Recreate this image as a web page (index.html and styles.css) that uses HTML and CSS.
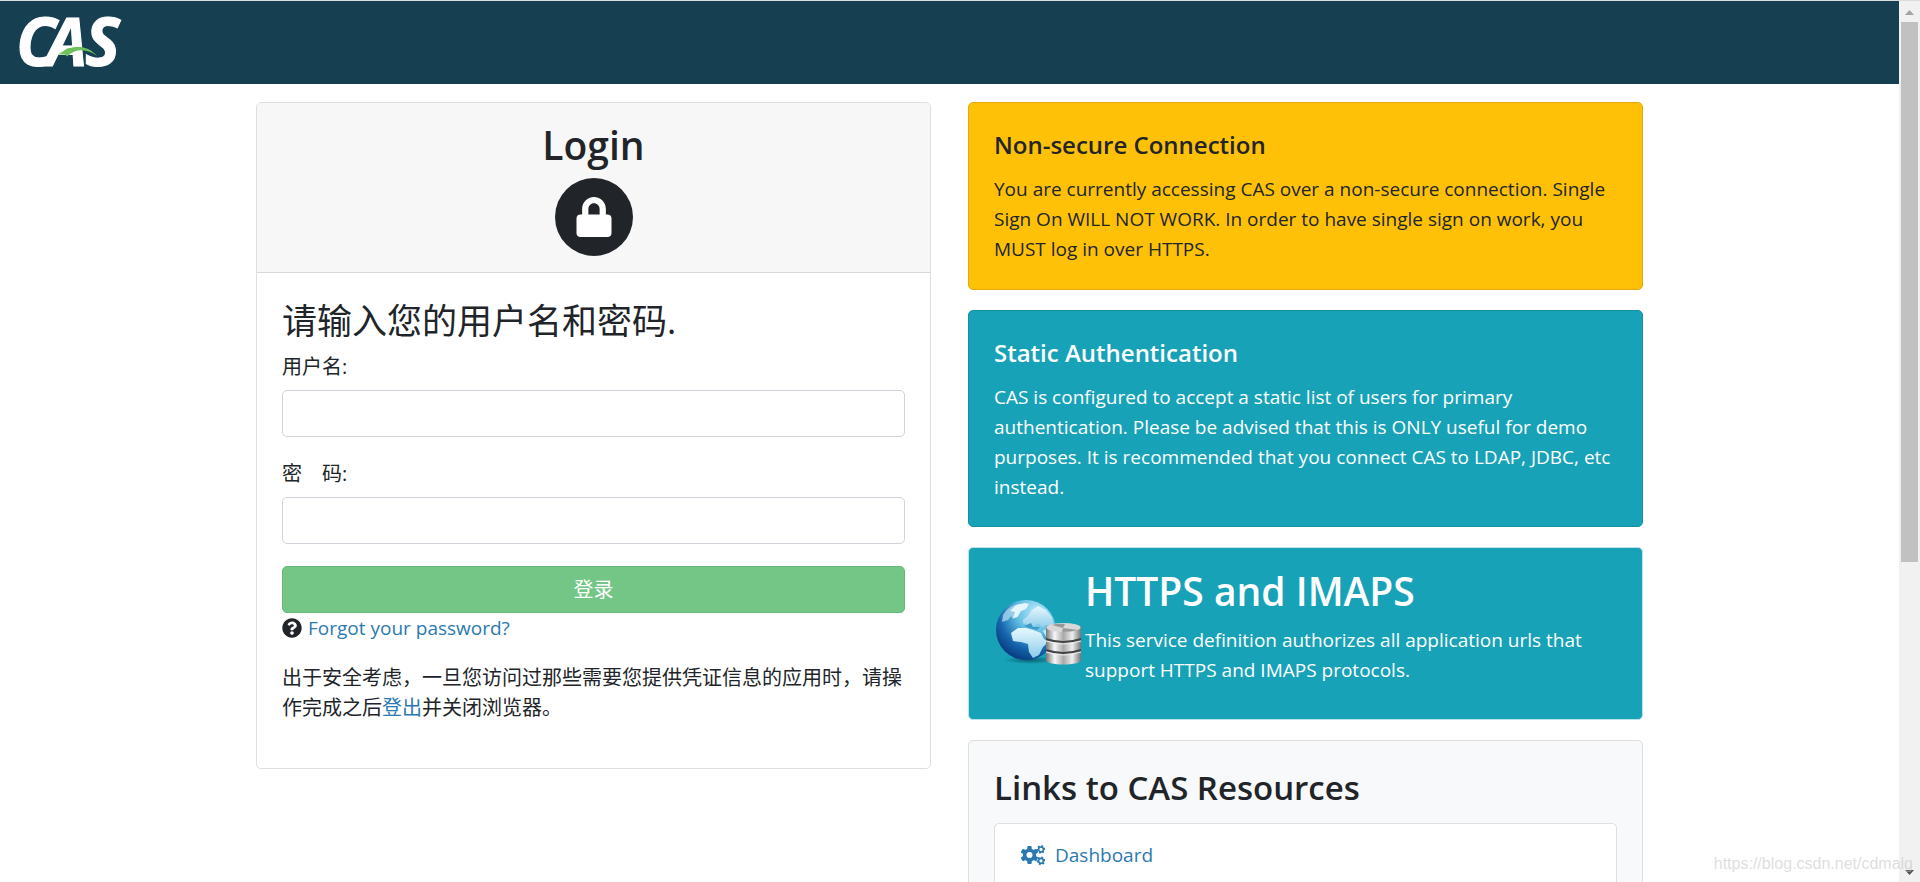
FILE: index.html
```html
<!DOCTYPE html>
<html lang="zh-CN">
<head>
<meta charset="utf-8">
<title>Login - CAS</title>
<link rel="stylesheet" href="styles.css">
</head>
<body>
<div class="page">
  <header class="topbar">
    <svg class="logo" width="124" height="83" viewBox="-8 0 124 83" role="img" aria-label="CAS">
      <text class="logo-text" x="-2 28 67" y="65">CAS</text>
      <path d="M40 53.500C44 51 47 49 49 47.500C60 44.500 71 45 79 55C70 48 58 46.500 49 55.500L47 53.500Z" fill="#6fc15f"/>
    </svg>
  </header>
  <main class="container">
    <section class="card login">
      <div class="card-head">
        <h1 class="title-lg">Login</h1>
        <svg class="lock" viewBox="0 0 78 78" aria-hidden="true">
          <circle cx="39" cy="39" r="39" fill="#212529"/>
          <svg x="21" y="19" width="36" height="40" viewBox="0 0 448 512"><path fill="#fff" d="M400 224h-24v-72C376 68.2 307.8 0 224 0S72 68.2 72 152v72H48c-26.5 0-48 21.5-48 48v192c0 26.5 21.5 48 48 48h352c26.5 0 48-21.5 48-48V272c0-26.5-21.5-48-48-48zm-104 0H152v-72c0-39.7 32.3-72 72-72s72 32.3 72 72v72z"/></svg>
        </svg>
      </div>
      <form class="card-body">
        <h2 class="prompt">请输入您的用户名和密码.</h2>
        <div class="field">
          <label for="username">用户名:</label>
          <input id="username" type="text">
        </div>
        <div class="field">
          <label for="password">密　码:</label>
          <input id="password" type="password">
        </div>
        <button class="submit" type="button">登录</button>
        <div class="forgot">
          <svg width="20" height="20" viewBox="0 0 512 512" aria-hidden="true"><path fill="#212529" d="M504 256c0 136.997-111.043 248-248 248S8 392.997 8 256C8 119.083 119.043 8 256 8s248 111.083 248 248zM262.655 90c-54.497 0-89.255 22.957-116.549 63.758-3.536 5.286-2.353 12.415 2.715 16.258l34.699 26.31c5.205 3.947 12.621 3.008 16.665-2.122 17.864-22.658 30.113-35.797 57.303-35.797 20.429 0 45.698 13.148 45.698 32.958 0 14.976-12.363 22.667-32.534 33.976C247.128 238.528 216 254.941 216 296v4c0 6.627 5.373 12 12 12h56c6.627 0 12-5.373 12-12v-1.333c0-28.462 83.186-29.647 83.186-106.667 0-58.002-60.165-102-116.531-102zM256 338c-25.365 0-46 20.635-46 46 0 25.364 20.635 46 46 46s46-20.636 46-46c0-25.365-20.635-46-46-46z"/></svg>
          <a href="#">Forgot your password?</a>
        </div>
        <p class="notice">出于安全考虑，一旦您访问过那些需要您提供凭证信息的应用时，请操作完成之后<a href="#">登出</a>并关闭浏览器。</p>
      </form>
    </section>
    <div class="side">
      <section class="card pad warning">
        <h4 class="title-sm">Non-secure Connection</h4>
        <p>You are currently accessing CAS over a non-secure connection. Single Sign On WILL NOT WORK. In order to have single sign on work, you MUST log in over HTTPS.</p>
      </section>
      <section class="card pad info">
        <h4 class="title-sm">Static Authentication</h4>
        <p>CAS is configured to accept a static list of users for primary authentication. Please be advised that this is ONLY useful for demo purposes. It is recommended that you connect CAS to LDAP, JDBC, etc instead.</p>
      </section>
      <section class="card service">
        <svg class="service-icon" width="91" height="90" viewBox="0 0 91 90" aria-hidden="true">
          <defs>
            <radialGradient id="sea" cx=".68" cy=".2" r=".85"><stop offset="0" stop-color="#b9e9fa"/><stop offset=".4" stop-color="#62bde2"/><stop offset=".75" stop-color="#1565ac"/><stop offset="1" stop-color="#073b80"/></radialGradient>
            <linearGradient id="land" x1="0" y1="0" x2="0" y2="1"><stop offset="0" stop-color="#e6f8fd"/><stop offset="1" stop-color="#8ccbeb"/></linearGradient>
            <linearGradient id="metal"><stop offset="0" stop-color="#777"/><stop offset=".25" stop-color="#f7f7f7"/><stop offset=".5" stop-color="#a9a9a9"/><stop offset=".75" stop-color="#eee"/><stop offset="1" stop-color="#777"/></linearGradient>
            <radialGradient id="shade"><stop offset="0" stop-color="#003040" stop-opacity=".6"/><stop offset="1" stop-color="#003040" stop-opacity="0"/></radialGradient>
          </defs>
          <ellipse cx="36" cy="74" rx="27" ry="4" fill="url(#shade)"/>
          <circle cx="32" cy="44" r="30" fill="url(#sea)"/>
          <path d="M9 29C14 21 20 18 27 18L33 20L31 24L27 25L24 31L19 33L17 30L14 34L8 36Z" fill="#a5d4ee" opacity=".8"/>
          <path d="M22 19L31 17L35 18L32 23L27 25L23 31L19 32L21 26L16 25Z" fill="#e4f6fc"/>
          <path d="M34 30L38 24L44 20L52 24L58 31L61 42L57 43L53 39L48 41L44 37L40 40L34 40L29 37L29 34Z" fill="url(#land)"/>
          <path d="M17 47L24 42L32 42L39 44L47 47L50 53L55 55L49 61L45 69L39 72L35 66L34 58L27 56L19 55Z" fill="url(#land)"/>
          <path d="M30 40L37 37L39 41L46 41L43 44L35 42Z" fill="#3f9bc5"/>
          <path d="M50 44L56 55L60 49" fill="none" stroke="#b9e5f5" stroke-width="3"/>
          <path d="M52 41C52 37 87 37 87 41V74C87 80 52 80 52 74Z" fill="url(#metal)"/>
          <ellipse cx="69.500" cy="41.500" rx="17" ry="4.500" fill="#d8d8d8"/>
          <path d="M69 42L58 39Q64 37 71 38ZM69 42L84 44Q77 46 68 46Z" fill="#999"/>
          <path d="M52 53Q69 59 87 53M52 64Q69 70 87 64" fill="none" stroke="#444" stroke-width="2"/>
          <path d="M52 55Q69 61 87 55M52 66Q69 72 87 66" fill="none" stroke="#eee" stroke-width="1"/>
        </svg>
        <div class="service-text">
          <h1 class="title-lg">HTTPS and IMAPS</h1>
          <p>This service definition authorizes all application urls that support HTTPS and IMAPS protocols.</p>
        </div>
      </section>
      <section class="card pad links">
        <h3 class="title-md">Links to CAS Resources</h3>
        <div class="list">
          <a class="list-item" href="#">
            <svg width="25" height="20" viewBox="0 0 25 20" aria-hidden="true">
              <defs><g id="gear"><circle r="6.6"/><rect x="-2.2" y="-9" width="4.4" height="18" rx="1"/><rect x="-2.2" y="-9" width="4.4" height="18" rx="1" transform="rotate(60)"/><rect x="-2.2" y="-9" width="4.4" height="18" rx="1" transform="rotate(120)"/></g></defs>
              <g fill="#2a7ab0">
                <use href="#gear" transform="translate(9.500 10)"/>
                <use href="#gear" transform="translate(21 4.4) rotate(20) scale(.48)"/>
                <use href="#gear" transform="translate(21 15.8) rotate(20) scale(.48)"/>
              </g>
              <g fill="#fff"><circle cx="9.500" cy="10" r="3"/><circle cx="21" cy="4.4" r="1.6"/><circle cx="21" cy="15.8" r="1.6"/></g>
            </svg>
            <span>Dashboard</span>
          </a>
        </div>
      </section>
    </div>
  </main>
</div>
<div class="scrollbar" aria-hidden="true">
  <svg width="9" height="5" viewBox="0 0 9 5"><path d="M0 5L4.500 0L9 5Z" fill="#a3a3a3"/></svg>
  <div class="thumb"></div>
  <svg width="9" height="5" viewBox="0 0 9 5"><path d="M0 0L4.500 5L9 0Z" fill="#505050"/></svg>
</div>
<div class="watermark">https://blog.csdn.net/cdmalg</div>
</body>
</html>
```

FILE: styles.css
```css
* { box-sizing: border-box; }

body {
  margin: 0;
  height: 100vh;
  display: flex;
  overflow: hidden;
  border-top: 1px solid #dadcde;
  background: #fff;
  color: #212529;
  font-family: "Open Sans", "Noto Sans CJK SC", sans-serif;
  font-size: 19px;
  line-height: 30px;
}

h1, h2, h3, h4, p { margin: 0; }
a { color: #2a7ab0; text-decoration: none; }

.page { flex: 1; min-width: 0; overflow: hidden; }

.topbar {
  display: flex;
  align-items: center;
  height: 83px;
  padding: 0 10px;
  background: #163f51;
}
.logo { overflow: visible; }
.logo-text {
  fill: #fff;
  stroke: #fff;
  stroke-width: 1px;
  font-family: "Open Sans", sans-serif;
  font-size: 66px;
  font-weight: 700;
  font-style: italic;
}

.container {
  display: grid;
  grid-template-columns: 1fr 1fr;
  align-items: start;
  gap: 37px;
  max-width: 1387px;
  margin: 0 auto;
  padding-top: 18px;
}

.card {
  border: 1px solid #dfdfdf;
  border-radius: 5px;
  background: #fff;
  overflow: hidden;
}
.pad { padding: 25px 25px 24px; }

.title-lg { font-size: 39px; font-weight: 600; line-height: 48px; }
.title-md { font-size: 33px; font-weight: 600; line-height: 44px; }
.title-sm { font-size: 24px; font-weight: 600; line-height: 34px; margin-bottom: 12px; }

.card-head {
  display: flex;
  flex-direction: column;
  align-items: center;
  gap: 9px;
  padding: 18px 25px 16px;
  border-bottom: 1px solid #d8d8d8;
  background: #f7f7f7;
}
.lock { width: 78px; height: 78px; display: block; }

.card-body { padding: 27px 25px 45px; font-size: 20px; }
.prompt { font-size: 35px; font-weight: 400; line-height: 42px; margin-bottom: 10px; }

.field { display: flex; flex-direction: column; gap: 8px; margin-bottom: 22px; }
.field input {
  width: 100%;
  height: 47px;
  padding: 8px 15px;
  border: 1px solid #ced4da;
  border-radius: 5px;
  font: inherit;
}

.submit {
  display: block;
  width: 100%;
  height: 47px;
  border: 1px solid #67b879;
  border-radius: 5px;
  background: #74c686;
  color: #fff;
  font: inherit;
}
.forgot { display: flex; align-items: center; gap: 6px; font-size: 19px; }
.notice { margin-top: 20px; }

.side { display: flex; flex-direction: column; gap: 20px; }
.warning { padding-bottom: 25px; background: #ffc107; border-color: #dfab10; }
.info { background: #18a2b8; border-color: #178fa2; color: #fff; }

.service {
  display: flex;
  align-items: flex-start;
  padding: 19px 25px 34px;
  background: #18a2b8;
  border-color: #b9e3ea;
  color: #fff;
}
.service-icon { flex: none; margin-top: 19px; }
.service-text { display: grid; gap: 10px; }

.links { background: #f8f9fa; }
.list {
  margin-top: 13px;
  border: 1px solid #dfdfdf;
  border-radius: 5px;
  background: #fff;
}
.list-item { display: flex; align-items: center; gap: 10px; padding: 16px 25px; }

.scrollbar {
  display: flex;
  flex-direction: column;
  align-items: center;
  width: 21px;
  padding: 9px 2px 7px;
  background: #f1f1f1;
}
.thumb { flex: 0 0 540px; width: 17px; margin: 7px 0 auto; background: #c1c1c1; }

.watermark {
  position: absolute;
  right: 7px;
  bottom: 6px;
  color: rgba(190, 190, 190, 0.5);
  font-family: "Liberation Sans", Arial, sans-serif;
  font-size: 16px;
  line-height: 24px;
}
```
